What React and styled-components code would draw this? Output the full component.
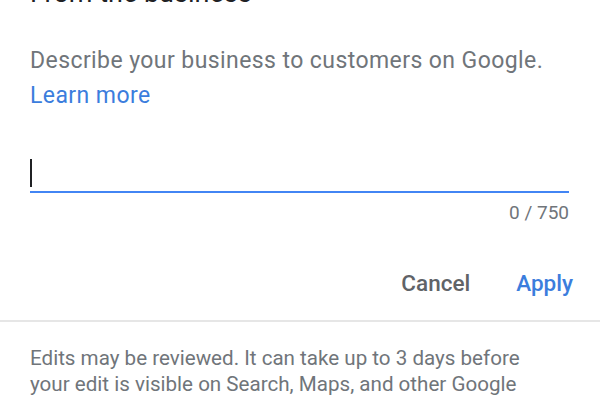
import React from "react";
import styled, { createGlobalStyle } from "styled-components";

const Global = createGlobalStyle`
  html, body {
    margin: 0;
    padding: 0;
    background: #fff;
    overflow: hidden;
  }
  body {
    font-family: Roboto, "Noto Sans", Arial, sans-serif;
  }
`;

const Sheet = styled.div`
  width: 600px;
  height: 400px;
  overflow: hidden;
  background: #fff;
`;

const Body = styled.div`
  padding: 0 31px 0 30px;
`;

const Title = styled.h2`
  margin: -23px 0 0;
  font-size: 27px;
  line-height: 32px;
  font-weight: 400;
  color: #202124;
`;

const Intro = styled.p`
  margin: 34px 0 0;
  font-size: 23px;
  letter-spacing: 0.42px;
  line-height: 35px;
  color: #70757a;
`;

const Link = styled.a`
  display: block;
  color: #3b7ddd;
  text-decoration: none;
`;

const Field = styled.div`
  margin-top: 45px;
  border-bottom: 2px solid #4285f4;
  height: 35px;
  display: flex;
  align-items: flex-end;
  padding-bottom: 4px;
  box-sizing: border-box;
`;

const Caret = styled.span`
  display: block;
  width: 2px;
  height: 28px;
  background: #202124;
`;

const Counter = styled.div`
  text-align: right;
  margin-top: 9px;
  font-size: 19px;
  line-height: 22px;
  color: #70757a;
`;

const Actions = styled.div`
  display: flex;
  justify-content: flex-end;
  gap: 46px;
  margin: 46px -4px 0 0;
`;

const Action = styled.button`
  border: 0;
  background: none;
  padding: 0;
  font-family: inherit;
  font-size: 22.5px;
  line-height: 26px;
  font-weight: 500;
  color: ${(p) => (p.$primary ? "#3b7ddd" : "#606367")};
  cursor: pointer;
`;

const Divider = styled.hr`
  margin: 24px 0 0;
  border: 0;
  border-top: 2px solid #e6e6e6;
`;

const Note = styled.p`
  margin: 23px 0 0;
  padding: 0 40px 0 30px;
  font-size: 20.6px;
  line-height: 26px;
  color: #70757a;
`;

export default function App() {
  return (
    <>
      <Global />
      <Sheet>
        <Body>
          <Title>From the business</Title>
          <Intro>
            Describe your business to customers on Google.
            <Link href="#">Learn more</Link>
          </Intro>
          <Field>
            <Caret />
          </Field>
          <Counter>0 / 750</Counter>
          <Actions>
            <Action>Cancel</Action>
            <Action $primary>Apply</Action>
          </Actions>
        </Body>
        <Divider />
        <Note>
          Edits may be reviewed. It can take up to 3 days before your edit is
          visible on Search, Maps, and other Google services.
        </Note>
      </Sheet>
    </>
  );
}
